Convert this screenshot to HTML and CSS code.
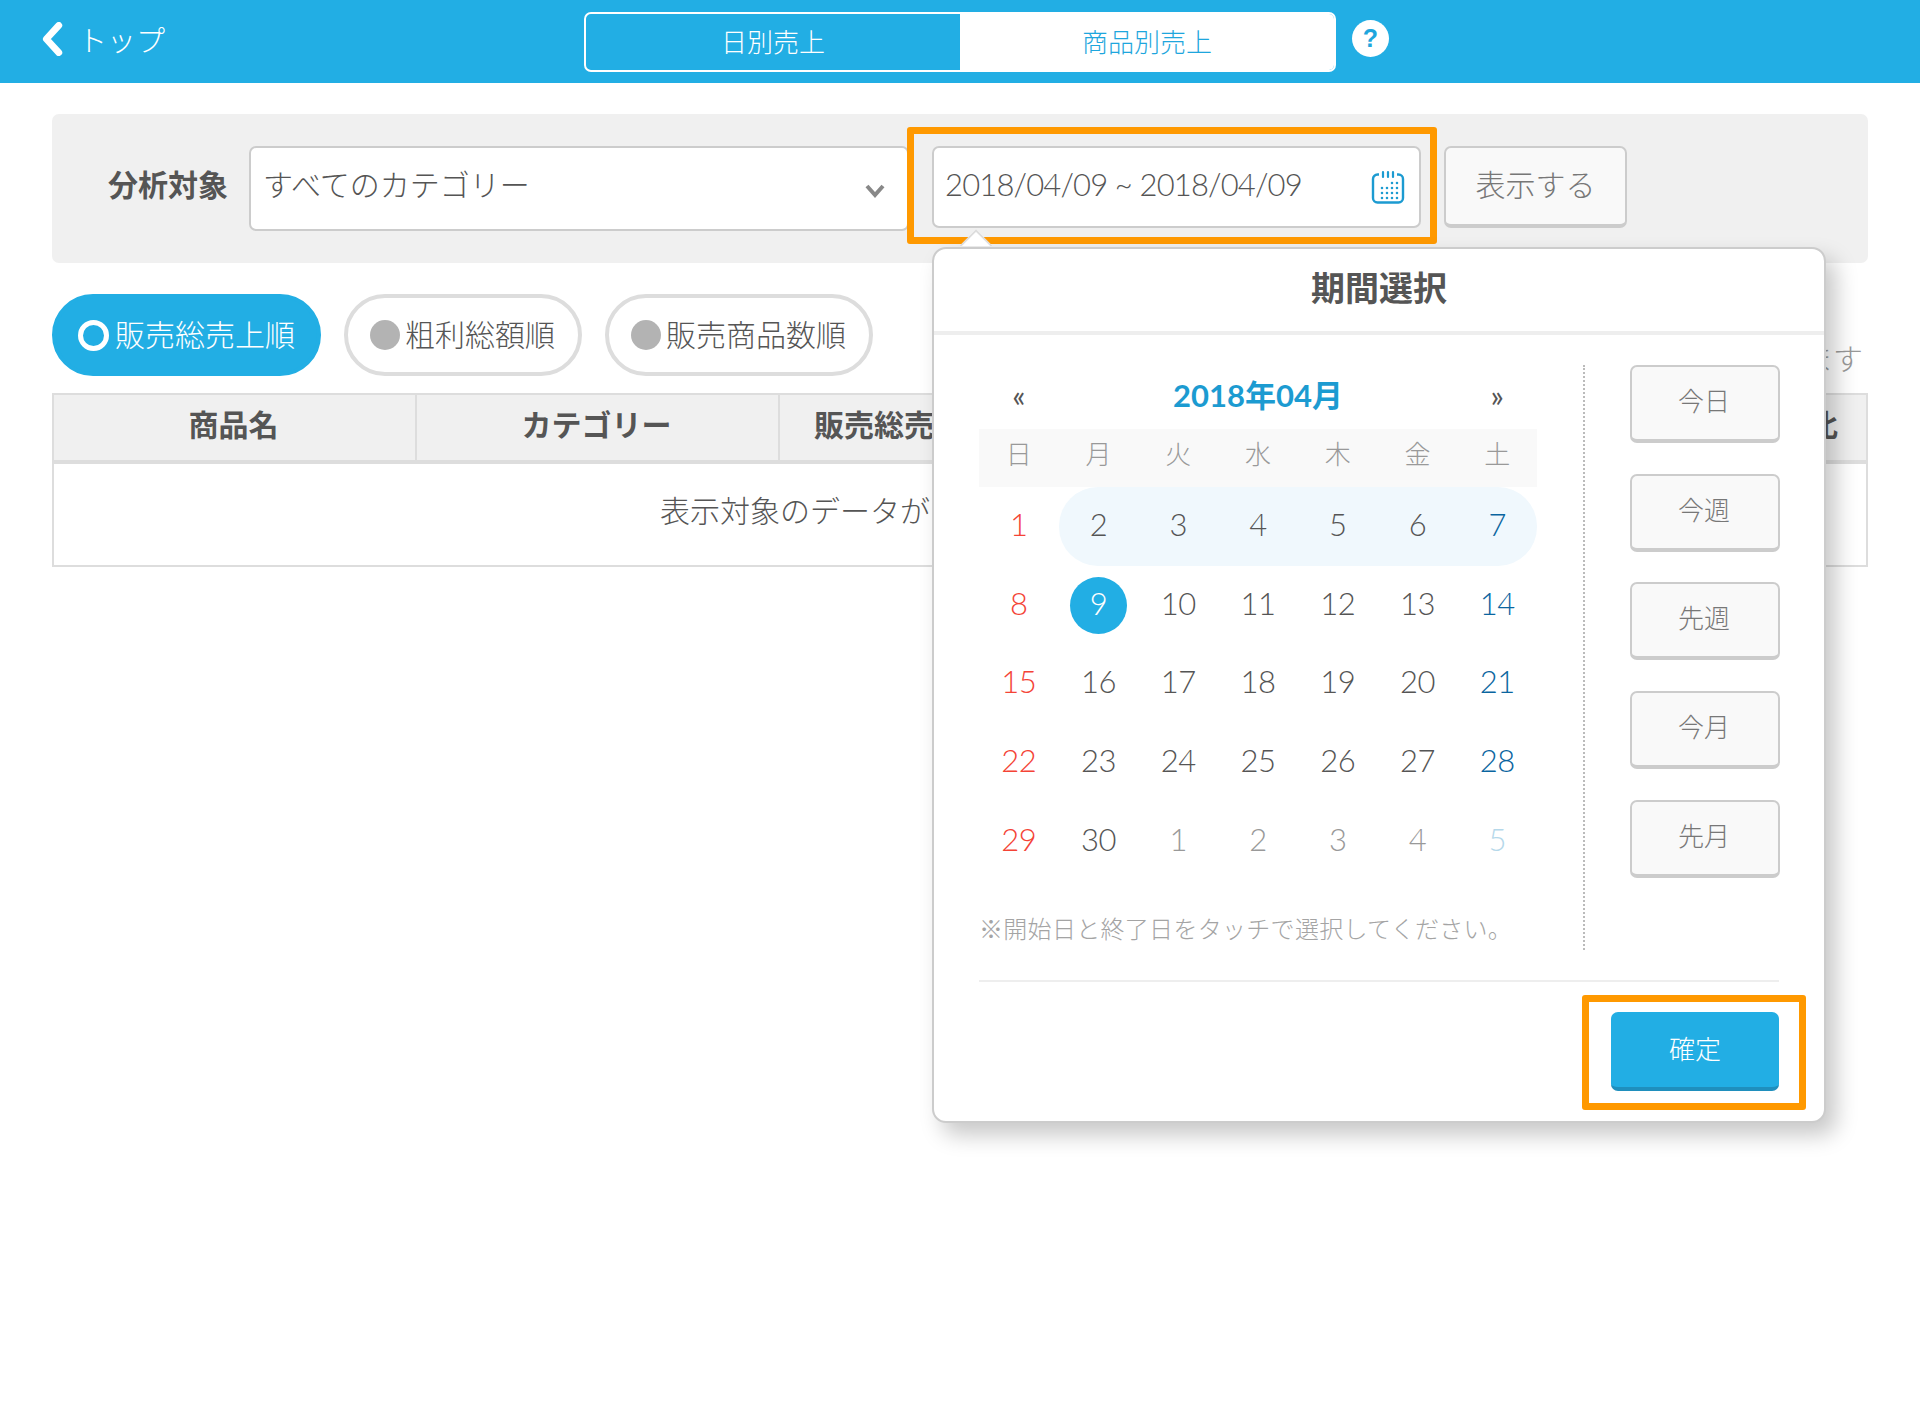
FILE: index.html
```html
<!DOCTYPE html>
<html lang="ja">
<head>
<meta charset="utf-8">
<title>商品別売上</title>
<link rel="stylesheet" href="styles.css">
</head>
<body>
<header class="topbar">
  <a class="back">
    <svg class="back-icon" viewBox="0 0 20 30"><polyline points="16,3 5,15 16,27"/></svg>
    <span>トップ</span>
  </a>
  <div class="segment">
    <div class="seg seg-left">日別売上</div>
    <div class="seg seg-right">商品別売上</div>
  </div>
  <div class="help">?</div>
</header>

<main class="main">
  <section class="filter">
    <div class="filter-label">分析対象</div>
    <div class="select">
      <span>すべてのカテゴリー</span>
      <svg class="select-arrow" viewBox="0 0 20 14"><polyline points="2,2 10,11 18,2"/></svg>
    </div>
    <div class="date-wrap">
      <div class="date-input">
        <span>2018/04/09 ~ 2018/04/09</span>
        <svg class="cal-icon" viewBox="0 0 34 34">
          <path class="cal-outline" d="M8 4.5H6.5A4.5 4.5 0 0 0 2 9v19a4.5 4.5 0 0 0 4.5 4.5h21A4.5 4.5 0 0 0 32 28V9a4.5 4.5 0 0 0-4.5-4.5H26"/>
          <path class="cal-ticks" d="M12 2v5M17 2v5M22 2v5"/>
          <path class="cal-dots" d="M21 13h.01M26 13h.01M11 18h.01M16 18h.01M21 18h.01M26 18h.01M11 23h.01M16 23h.01M21 23h.01M26 23h.01M11 28h.01M16 28h.01M21 28h.01M26 28h.01"/>
        </svg>
      </div>
      <div class="mark mark-date"></div>
      <div class="popover">
        <div class="pop-arrow"></div>
        <div class="pop-title">期間選択</div>
        <div class="pop-body">
          <div class="cal">
            <div class="cal-nav">
              <span class="nav-arrow">«</span>
              <span class="cal-month">2018年04月</span>
              <span class="nav-arrow">»</span>
            </div>
            <div class="week">
              <span>日</span><span>月</span><span>火</span><span>水</span><span>木</span><span>金</span><span>土</span>
            </div>
            <div class="days">
              <span class="sun">1</span><span class="range range-start">2</span><span class="range">3</span><span class="range">4</span><span class="range">5</span><span class="range">6</span><span class="range range-end sat">7</span>
              <span class="sun">8</span><span class="picked"><b>9</b></span><span>10</span><span>11</span><span>12</span><span>13</span><span class="sat">14</span>
              <span class="sun">15</span><span>16</span><span>17</span><span>18</span><span>19</span><span>20</span><span class="sat">21</span>
              <span class="sun">22</span><span>23</span><span>24</span><span>25</span><span>26</span><span>27</span><span class="sat">28</span>
              <span class="sun">29</span><span>30</span><span class="other">1</span><span class="other">2</span><span class="other">3</span><span class="other">4</span><span class="other-sat">5</span>
            </div>
            <p class="cal-note">※開始日と終了日をタッチで選択してください。</p>
          </div>
          <div class="presets">
            <button class="preset">今日</button>
            <button class="preset">今週</button>
            <button class="preset">先週</button>
            <button class="preset">今月</button>
            <button class="preset">先月</button>
          </div>
        </div>
        <div class="pop-foot">
          <div class="confirm-wrap">
            <button class="confirm">確定</button>
            <div class="mark mark-confirm"></div>
          </div>
        </div>
      </div>
    </div>
    <button class="show">表示する</button>
  </section>

  <section class="sort">
    <div class="pill pill-on"><i class="radio-on"></i>販売総売上順</div>
    <div class="pill"><i class="radio"></i>粗利総額順</div>
    <div class="pill"><i class="radio"></i>販売商品数順</div>
    <div class="sort-note">ます</div>
  </section>

  <table class="table">
    <colgroup>
      <col class="c1"><col class="c2"><col class="c3"><col class="c4"><col class="c5">
    </colgroup>
    <thead>
      <tr><th>商品名</th><th>カテゴリー</th><th>販売総売上</th><th></th><th>売上構成比</th></tr>
    </thead>
    <tbody>
      <tr><td colspan="5">表示対象のデータが</td></tr>
    </tbody>
  </table>
</main>
</body>
</html>
```
FILE: styles.css
```css
* { box-sizing: border-box; }
html, body { margin: 0; padding: 0; }
body {
  min-height: 1402px;
  background: #fff;
  color: #555;
  font-family: "Lato", "Noto Sans CJK JP", sans-serif;
  font-weight: 300;
  font-size: 30px;
  overflow: hidden;
}
button { font: inherit; cursor: pointer; }

.topbar {
  height: 83px;
  background: #22aee4;
  display: flex;
  align-items: center;
  padding-left: 40px;
  color: #fff;
}
.back { display: flex; align-items: center; gap: 14px; width: 544px; font-size: 29px; padding-bottom: 5px; }
.back-icon { width: 24px; height: 34px; }
.back-icon polyline { fill: none; stroke: #fff; stroke-width: 6; stroke-linecap: round; stroke-linejoin: round; }
.segment {
  display: flex;
  width: 752px;
  height: 60px;
  border: 2px solid #fff;
  border-radius: 7px;
  overflow: hidden;
  font-size: 26px;
}
.seg { flex: 1; display: flex; align-items: center; justify-content: center; padding-bottom: 2px; }
.seg-right { background: #fff; color: #1ea6dd; }
.help {
  width: 37px; height: 37px;
  margin: -6px 0 0 16px;
  border-radius: 50%;
  background: #fff;
  color: #1ea6dd;
  font-family: "Liberation Sans", sans-serif;
  font-weight: 700;
  font-size: 25px;
  display: flex; align-items: center; justify-content: center;
}

.main { padding: 31px 52px 0; }
.filter {
  height: 149px;
  background: #f0f0f0;
  border-radius: 7px;
  padding: 32px 0 0 56px;
  display: flex;
  align-items: flex-start;
}
.filter-label { width: 117px; height: 74px; margin-right: 24px; display: flex; align-items: center; font-weight: 700; white-space: nowrap; }
.select {
  width: 660px; height: 85px;
  background: #fff;
  border: 2px solid #ccc;
  border-radius: 7px;
  padding: 0 22px 11px 12px;
  display: flex; align-items: center; justify-content: space-between;
}
.select-arrow { width: 20px; height: 14px; margin-top: 15px; }
.select-arrow polyline { fill: none; stroke: #888; stroke-width: 4; }
.date-wrap { position: relative; margin: 0 23px; width: 489px; height: 82px; }
.date-input {
  height: 82px;
  background: #fff;
  border: 2px solid #ccc;
  border-radius: 7px;
  padding: 0 14px 6px 11px;
  display: flex; align-items: center; justify-content: space-between;
  font-size: 31px;
  letter-spacing: -.85px;
}
.cal-icon { width: 34px; height: 34px; margin-top: 6px; margin-left: 4px; }
.cal-outline { fill: none; stroke: #1c9bd1; stroke-width: 2.4; }
.cal-ticks { stroke: #1c9bd1; stroke-width: 2.2; stroke-linecap: round; }
.cal-dots { stroke: #1c9bd1; stroke-width: 2.6; stroke-linecap: round; }
.mark { position: absolute; border: 7px solid #ff9900; border-radius: 3px; pointer-events: none; }
.mark-date { top: -19px; right: -16px; bottom: -16px; left: -25px; }
.show {
  width: 183px; height: 82px;
  background: #f9f9f9;
  border: 2px solid #ccc;
  border-bottom-width: 4px;
  border-radius: 7px;
  color: #777;
  padding: 0 0 7px;
}

.popover {
  position: absolute;
  top: 101px; left: 0;
  width: 894px;
  z-index: 5;
  background: #fff;
  border: 2px solid #ccc;
  border-radius: 14px;
  box-shadow: 10px 12px 22px rgba(0, 0, 0, .22);
}
.pop-arrow {
  position: absolute;
  top: -15px; left: 30px;
  width: 24px; height: 24px;
  background: #fff;
  border-top: 2px solid #ddd;
  border-left: 2px solid #ddd;
  transform: rotate(45deg);
  clip-path: polygon(0 0, 100% 0, 0 100%);
}
.pop-title {
  height: 86px;
  border-bottom: 4px solid #eee;
  font-size: 34px;
  font-weight: 700;
  display: flex; align-items: center; justify-content: center;
  padding-bottom: 8px;
}
.pop-body { display: flex; padding: 30px 0 30px 45px; }
.cal { width: 606px; height: 585px; padding-right: 46px; border-right: 2px dotted #bbb; }
.cal-nav { height: 64px; padding-bottom: 7px; display: grid; grid-template-columns: 79.7px 1fr 79.7px; align-items: center; text-align: center; }
.nav-arrow { font-size: 31px; font-weight: 400; margin-top: 2px; }
.cal-month { color: #1c9bd1; font-weight: 700; font-size: 31px; }
.week { height: 58px; padding-bottom: 11px; background: #f9f9f9; display: grid; grid-template-columns: repeat(7, 1fr); align-items: center; text-align: center; color: #999; font-size: 26px; }
.days { display: grid; grid-template-columns: repeat(7, 1fr); grid-auto-rows: 78.7px; font-size: 31px; letter-spacing: -.5px; }
.days > span { display: flex; align-items: center; justify-content: center; padding-bottom: 5px; }
.range { background: #f0f8fd; }
.range-start { border-radius: 39px 0 0 39px; }
.range-end { border-radius: 0 39px 39px 0; }
.sun { color: #f44336; }
.sat { color: #0a659f; }
.other { color: #999; }
.other-sat { color: #b5d8ea; }
.days > .picked { padding: 0; }
.picked b { width: 57px; height: 57px; padding-bottom: 5px; border-radius: 50%; background: #22aee4; color: #fff; font-weight: 300; display: flex; align-items: center; justify-content: center; }
.cal-note { margin: 31px 0 0; font-size: 24px; letter-spacing: .3px; line-height: 36px; color: #a4a4a4; white-space: nowrap; }
.presets { padding-left: 45px; display: flex; flex-direction: column; gap: 30.7px; }
.preset {
  width: 150px; height: 78px;
  background: #f9f9f9;
  border: 2px solid #ccc;
  border-bottom-width: 4px;
  border-radius: 7px;
  color: #777;
  font-size: 26px;
  padding: 0 2px 7px 0;
}
.pop-foot { margin: 0 45px 0 45px; padding: 30px 0 30px; border-top: 2px solid #eee; display: flex; justify-content: flex-end; }
.confirm-wrap { position: relative; }
.confirm {
  display: block;
  width: 168px; height: 79px;
  background: #22aee4;
  border: 0;
  border-bottom: 4px solid #1f8fbd;
  border-radius: 7px;
  color: #fff;
  font-size: 26px;
  padding: 0 0 5px;
}
.mark-confirm { top: -17px; right: -27px; bottom: -19px; left: -29px; }

.sort { height: 82px; margin-top: 31px; display: flex; gap: 23px; }
.pill {
  display: flex; align-items: center; gap: 5px;
  height: 82px;
  padding: 0 23px 4px 22px;
  border: 4px solid #ddd;
  border-radius: 42px;
  white-space: nowrap;
}
.pill-on { background: #22aee4; border-color: #22aee4; color: #fff; gap: 6px; padding-right: 22px; }
.radio { width: 30px; height: 30px; margin-top: 4px; border-radius: 50%; background: #b3b3b3; }
.radio-on { width: 31px; height: 31px; margin-top: 4px; border-radius: 50%; border: 5px solid #fff; }
.sort-note { margin-left: auto; align-self: flex-end; padding: 0 5px 1px 0; color: #999; line-height: 34px; }

.table {
  width: 100%;
  margin-top: 17px;
  table-layout: fixed;
  border-collapse: separate;
  border-spacing: 0;
  border: 2px solid #ddd;
}
.c1, .c2 { width: 363px; }
.c3 { width: 222px; }
.c4 { width: 660px; }
.table th {
  height: 69px;
  background: #f0f0f0;
  border-bottom: 4px solid #ddd;
  border-right: 2px solid #ddd;
  font-weight: 700;
  padding: 0 2px 10px 0;
}
.table th:last-child { border-right: 0; }
.table td { height: 101px; padding: 0 0 11px 606px; text-align: left; }
```
